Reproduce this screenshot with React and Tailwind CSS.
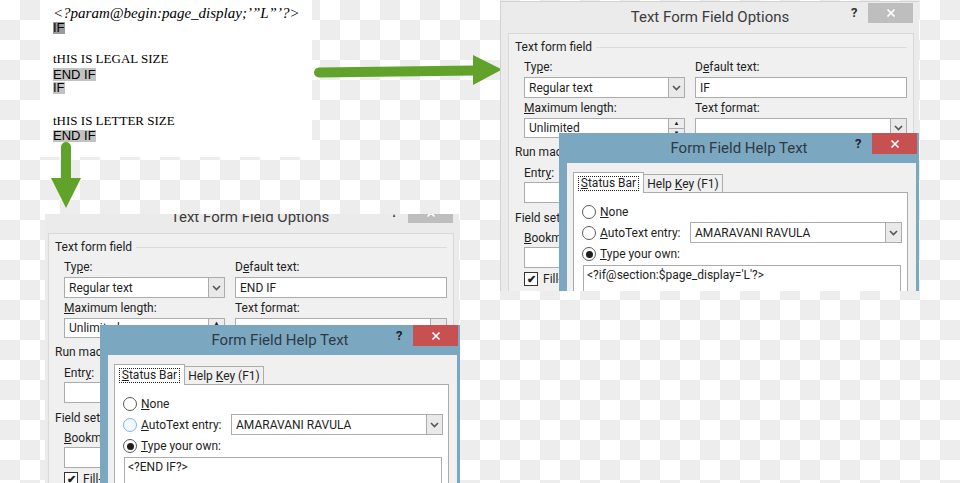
import React from 'react';

const UI = "font-['Roboto','Liberation_Sans',sans-serif] text-[12px] text-[#1e1e1e]";

function Chevron() {
  return (
    <svg width="9" height="6" viewBox="0 0 9 6">
      <path d="M1 1 L4.5 4.5 L8 1" stroke="#555" strokeWidth="1.6" fill="none" />
    </svg>
  );
}

function XMark() {
  return (
    <svg width="10" height="10" viewBox="0 0 10 10">
      <path d="M1.5 1.5 L8.5 8.5 M8.5 1.5 L1.5 8.5" stroke="#fff" strokeWidth="1.7" />
    </svg>
  );
}

function Select({ value, className = '' }) {
  return (
    <div className={`flex bg-white border border-[#acacac] ${className}`}>
      <div className="flex-1 flex items-center pl-[4px] overflow-hidden whitespace-nowrap">{value}</div>
      <div className="w-[16px] border-l border-[#acacac] bg-[#e9e9e9] flex items-center justify-center">
        <Chevron />
      </div>
    </div>
  );
}

function TextBox({ value, className = '' }) {
  return (
    <div className={`flex items-center bg-white border border-[#acacac] pl-[4px] whitespace-nowrap ${className}`}>
      {value}
    </div>
  );
}

function Spinner({ value, className = '' }) {
  return (
    <div className={`flex bg-white border border-[#acacac] ${className}`}>
      <div className="flex-1 flex items-center pl-[4px]">{value}</div>
      <div className="w-[16px] border-l border-[#acacac] flex flex-col">
        <div className="flex-1 bg-[#ececec] border-b border-[#acacac] flex items-center justify-center text-[6px] leading-none">▲</div>
        <div className="flex-1 bg-[#ececec] flex items-center justify-center text-[6px] leading-none">▼</div>
      </div>
    </div>
  );
}

function Lbl({ children, className = '' }) {
  return <div className={`h-[16px] leading-[16px] whitespace-nowrap ${className}`}>{children}</div>;
}

function Section({ title, className = '' }) {
  return (
    <div className={`flex items-center h-[16px] pl-[6px] pr-[6px] ${className}`}>
      <span className="whitespace-nowrap">{title}</span>
      <div className="flex-1 h-px bg-[#dcdcdc] ml-[4px]" />
    </div>
  );
}

function Radio({ checked, hover }) {
  return (
    <span
      className={`w-[14px] h-[14px] rounded-full border flex items-center justify-center ${
        hover ? 'border-[#7db7e8] bg-[#f1f8fe]' : 'border-[#5a5a5a] bg-white'
      }`}
    >
      {checked && <span className="w-[7px] h-[7px] rounded-full bg-[#1e1e1e]" />}
    </span>
  );
}

function FormOptions({ defaultText }) {
  return (
    <div className={`w-[419px] h-[320px] bg-[#ebebeb] border-l border-t border-[#d2d2d2] ${UI}`}>
      <div className="h-[31px] flex items-start">
        <div className="w-[69px]" />
        <div className="flex-1 text-center text-[15px] leading-[31px] text-[#3b3b3b]">Text Form Field Options</div>
        <div className="w-[69px] flex items-start pt-[1px]">
          <span className="w-[18px] pl-[1px] text-[13px] leading-[20px] font-bold text-[#333]">?</span>
          <div className="w-[45px] h-[20px] bg-[#bebebe] flex items-center justify-center">
            <XMark />
          </div>
        </div>
      </div>

      <div className="ml-[7px] w-[406px] h-[286px] border border-[#d9d9d9] bg-[#f0f0f0]">
        <Section title="Text form field" className="mt-[5px]" />
        <div className="mt-[4px] ml-[15px] grid grid-cols-[161px_212px] gap-x-[10px]">
          <Lbl>Ty<u>p</u>e:</Lbl>
          <Lbl>D<u>e</u>fault text:</Lbl>
          <Select value="Regular text" className="mt-[2px] h-[21px]" />
          <TextBox value={defaultText} className="mt-[2px] h-[21px]" />
          <Lbl className="mt-[2px]"><u>M</u>aximum length:</Lbl>
          <Lbl className="mt-[2px]">Text <u>f</u>ormat:</Lbl>
          <Spinner value="Unlimited" className="mt-[2px] h-[20px]" />
          <Select value="" className="mt-[2px] h-[20px]" />
        </div>

        <Section title="Run macro on" className="mt-[6px]" />
        <div className="mt-[5px] ml-[15px] w-[161px]">
          <Lbl>Entr<u>y</u>:</Lbl>
          <Select value="" className="mt-[1px] h-[21px]" />
        </div>

        <Section title="Field settings" className="mt-[7px]" />
        <div className="mt-[4px] ml-[15px] w-[161px]">
          <Lbl><u>B</u>ookmark:</Lbl>
          <TextBox value="" className="mt-[1px] h-[21px]" />
        </div>
        <div className="mt-[4px] ml-[15px] flex items-center gap-[5px] h-[14px]">
          <span className="w-[14px] h-[14px] border border-[#333] bg-white flex items-center justify-center text-[11px] leading-none font-bold">✔</span>
          <span>Fill-in enabled</span>
        </div>
      </div>
    </div>
  );
}

function HelpText({ text, hover }) {
  return (
    <div className={`w-[360px] h-[200px] bg-[#7ba7c1] ${UI}`}>
      <div className="h-[30px] flex items-start">
        <div className="w-[70px]" />
        <div className="flex-1 text-center text-[15px] leading-[31px] text-[#2f3a42]">Form Field Help Text</div>
        <div className="w-[70px] flex items-start">
          <span className="w-[23px] pl-[6px] text-[13px] leading-[22px] font-bold text-[#222]">?</span>
          <div className="w-[45px] h-[21px] bg-[#c75050] flex items-center justify-center">
            <XMark />
          </div>
        </div>
      </div>

      <div className="ml-[8px] w-[349px] h-[170px] bg-[#f0f0f0] pt-[9px] pl-[6px]">
        <div className="flex items-end h-[20px]">
          <div className="relative z-10 -mb-px h-[21px] w-[71px] bg-white border border-b-0 border-[#acacac] flex items-center justify-center">
            <span className="border border-dotted border-[#222] px-[2px] leading-[13px]">
              <u>S</u>tatus Bar
            </span>
          </div>
          <div className="h-[18px] w-[79px] bg-[#f0f0f0] border border-b-0 border-l-0 border-[#acacac] flex items-center justify-center whitespace-pre">
            <span>Help <u>K</u>ey (F1)</span>
          </div>
        </div>
        <div className="w-[335px] h-[140px] bg-white border border-[#acacac] pl-[8px] pr-[5px]">
          <div className="mt-[8px] h-[21px] flex items-center gap-[4px]">
            <Radio />
            <span><u>N</u>one</span>
          </div>
          <div className="h-[21px] flex items-center gap-[4px]">
            <Radio hover={hover} />
            <span><u>A</u>utoText entry:</span>
            <Select value="AMARAVANI RAVULA" className="ml-auto w-[212px] h-[21px] border-[#a6a6a6]" />
          </div>
          <div className="h-[22px] flex items-center gap-[4px]">
            <Radio checked />
            <span><u>T</u>ype your own:</span>
          </div>
          <div className="ml-[1px] w-[318px] h-[60px] border border-[#acacac] bg-white px-[3px] pt-[1px] leading-[16px] whitespace-nowrap">
            {text}
          </div>
        </div>
      </div>
    </div>
  );
}

export default function App() {
  return (
    <div className="relative w-[960px] h-[483px] overflow-hidden bg-white bg-[image:repeating-conic-gradient(#ededed_0_25%,#ffffff_0_50%)] bg-[length:40px_40px]">
      {/* document snippet */}
      <div className="absolute left-[40px] top-0 w-[272px] h-[157px] bg-white pl-[13px] text-black">
        <div className="mt-[5px] h-[16px] leading-[16px] italic font-['Liberation_Serif',serif] text-[15px] whitespace-nowrap">
          &lt;?param@begin:page_display;’”L”’?&gt;
        </div>
        <div className="mt-[1px] h-[12px] font-['Liberation_Sans',sans-serif] text-[13px] leading-[12px]">
          <span className="inline-block bg-[#9a9a9a] h-[12px]">IF</span>
        </div>
        <div className="mt-[17px] h-[16px] leading-[16px] font-['Liberation_Serif',serif] text-[13px]">tHIS IS LEGAL SIZE</div>
        <div className="mt-[1px] h-[13px] font-['Liberation_Sans',sans-serif] text-[13px] leading-[13px]">
          <span className="inline-block bg-[#c2c2c2] h-[13px]">END IF</span>
        </div>
        <div className="mt-[1px] h-[12px] font-['Liberation_Sans',sans-serif] text-[13px] leading-[12px]">
          <span className="inline-block bg-[#c2c2c2] h-[12px]">IF</span>
        </div>
        <div className="mt-[19px] h-[16px] leading-[16px] font-['Liberation_Serif',serif] text-[13px]">tHIS IS LETTER SIZE</div>
        <div className="mt-[1px] h-[12px] font-['Liberation_Sans',sans-serif] text-[13px] leading-[12px]">
          <span className="inline-block bg-[#c2c2c2] h-[12px]">END IF</span>
        </div>
      </div>

      {/* arrows */}
      <svg className="absolute left-[310px] top-[50px]" width="200" height="40" viewBox="0 0 200 40">
        <line x1="9" y1="22.5" x2="165" y2="20.5" stroke="#61a22b" strokeWidth="10" strokeLinecap="round" />
        <polygon points="163,5 192,19.5 163,35" fill="#61a22b" />
      </svg>
      <svg className="absolute left-[45px] top-[135px]" width="45" height="80" viewBox="0 0 45 80">
        <line x1="21" y1="12" x2="21" y2="46" stroke="#61a22b" strokeWidth="10" strokeLinecap="round" />
        <polygon points="6,43 36,43 21,73" fill="#61a22b" />
      </svg>

      {/* right group */}
      <div className="absolute left-[500px] top-[1px] w-[419px] h-[290px] overflow-hidden">
        <FormOptions defaultText="IF" />
      </div>
      <div className="absolute left-[559px] top-[133px] w-[360px] h-[158px] overflow-hidden">
        <HelpText text="<?if@section:$page_display='L'?>" />
      </div>

      {/* bottom group */}
      <div className="absolute left-[45px] top-[214px] w-[415px] h-[269px] overflow-hidden">
        <div className="-ml-[5px] -mt-[13px]">
          <FormOptions defaultText="END IF" />
        </div>
      </div>
      <div className="absolute left-[100px] top-[325px] w-[360px] h-[158px] overflow-hidden">
        <HelpText text="<?END IF?>" hover />
      </div>
    </div>
  );
}
